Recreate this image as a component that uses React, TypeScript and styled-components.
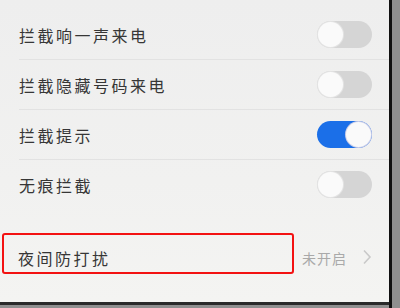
import styled, { createGlobalStyle } from 'styled-components';

const GlobalStyle = createGlobalStyle`
  html, body {
    margin: 0;
    padding: 0;
    background: #8a8a8a;
  }
  * {
    box-sizing: border-box;
  }
`;

const Device = styled.div`
  display: flex;
  width: 400px;
  height: 308px;
  background: #8f8f8f;
  overflow: hidden;
`;

const Screen = styled.div`
  display: flex;
  flex-direction: column;
  width: 389px;
  height: 305px;
  padding-top: 10px;
  background: linear-gradient(180deg, #eeeeee 0%, #f1f1f0 60%, #f4f4f2 100%);
  border-bottom: 3px solid #2a2a2a;
  font-family: 'Noto Sans CJK SC', 'Noto Sans', sans-serif;
`;

const Bezel = styled.div`
  width: 3px;
  height: 308px;
  background: #111;
`;

const Group = styled.div`
  display: flex;
  flex-direction: column;
`;

const Row = styled.div<{ $last?: boolean }>`
  display: flex;
  align-items: center;
  height: 50px;
  margin-left: 19px;
  padding-right: 17px;
  border-bottom: 1px solid ${(p) => (p.$last ? 'transparent' : '#e2e2e2')};
`;

const Label = styled.span`
  flex: 1;
  font-size: 16px;
  letter-spacing: 2.5px;
  color: #363636;
  padding-top: 1px;
`;

const Track = styled.div<{ $on?: boolean }>`
  position: relative;
  width: 55px;
  height: 27px;
  border-radius: 14px;
  background: ${(p) => (p.$on ? '#1b6fe8' : '#d5d5d5')};
`;

const Knob = styled.div<{ $on?: boolean }>`
  position: absolute;
  top: 1px;
  left: ${(p) => (p.$on ? '29px' : '1px')};
  width: 25px;
  height: 25px;
  border-radius: 50%;
  background: #fafafa;
  box-shadow: 0 0 0 1px ${(p) => (p.$on ? '#c9cde8' : '#e4e4e4')};
`;

const NightRow = styled.div`
  position: relative;
  display: flex;
  align-items: center;
  height: 54px;
  margin-top: 20px;
  padding-left: 18px;
  padding-right: 17px;
`;

const Value = styled.span`
  font-size: 14px;
  letter-spacing: 1px;
  color: #a9a9a9;
  margin-right: 15px;
  padding-top: 2px;
`;

const Highlight = styled.div`
  position: absolute;
  left: 2px;
  top: 3px;
  width: 292px;
  height: 41px;
  border: 2px solid #f31212;
  border-radius: 3px;
  pointer-events: none;
`;

const Chevron = () => (
  <svg width="10" height="16" viewBox="0 0 10 16">
    <path d="M2 1.5 L8 8 L2 14.5" fill="none" stroke="#c9c9c9" strokeWidth="1.6" />
  </svg>
);

const Toggle = ({ on }: { on?: boolean }) => (
  <Track $on={on}>
    <Knob $on={on} />
  </Track>
);

const items = [
  { label: '拦截响一声来电', on: false },
  { label: '拦截隐藏号码来电', on: false },
  { label: '拦截提示', on: true },
  { label: '无痕拦截', on: false },
];

const App = () => {
  return (
    <>
      <GlobalStyle />
      <Device>
        <Screen>
          <Group>
            {items.map((it, i) => (
              <Row key={it.label} $last={i === items.length - 1}>
                <Label>{it.label}</Label>
                <Toggle on={it.on} />
              </Row>
            ))}
          </Group>
          <NightRow>
            <Highlight />
            <Label>夜间防打扰</Label>
            <Value>未开启</Value>
            <Chevron />
          </NightRow>
        </Screen>
        <Bezel />
      </Device>
    </>
  );
};

export default App;
